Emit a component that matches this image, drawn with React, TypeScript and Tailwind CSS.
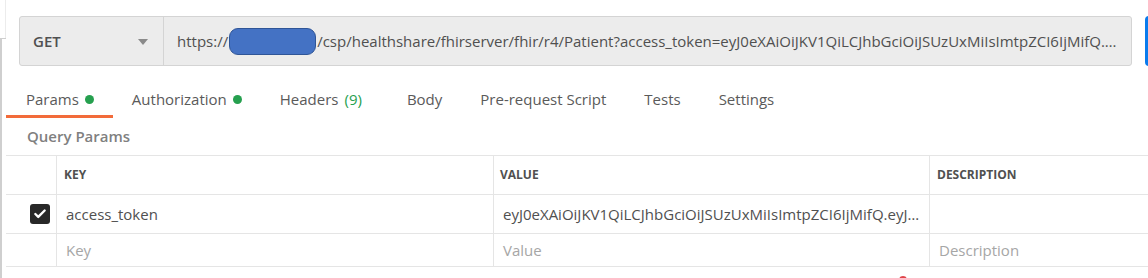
import { Check } from 'lucide-react';

const TOKEN =
  'eyJ0eXAiOiJKV1QiLCJhbGciOiJSUzUxMiIsImtpZCI6IjMifQ.eyJhdWQiOiJodHRwczovL2Zoa XJzZXJ2ZXIvZmhpci9yNCIsImV4cCI6MTYx';

const tabs = [
  { label: 'Params', dot: true, active: true, pad: 'pl-[20px] pr-[19px]' },
  { label: 'Authorization', dot: true, pad: 'px-[19px]' },
  { label: 'Headers', count: '(9)', pad: 'pl-[19px] pr-[26px]' },
  { label: 'Body', pad: 'px-[19px]' },
  { label: 'Pre-request Script', pad: 'px-[19px]' },
  { label: 'Tests', pad: 'px-[19px]' },
  { label: 'Settings', pad: 'px-[19px]' },
];

function UrlBar() {
  return (
    <div className="flex items-start pl-[19px] pt-[16px]">
      <div className="flex h-[50px] w-[1113px] shrink-0 overflow-hidden rounded-[3px] border border-[#d4d4d4] bg-[#ececec]">
        <div className="flex w-[144px] shrink-0 items-center justify-between border-r border-[#d4d4d4] pl-[13px] pr-[15px]">
          <span className="text-[15px] font-semibold text-[#505050]">GET</span>
          <svg width="10" height="6" viewBox="0 0 10 6" className="mt-[1px]">
            <path d="M0 0h10L5 6z" fill="#8a8a8a" />
          </svg>
        </div>
        <div className="flex min-w-0 flex-1 items-center pl-[13px] pr-[12px] text-[15px] text-[#505050]">
          <span className="shrink-0">https://</span>
          <span className="mx-[1px] inline-block h-[27px] w-[87px] shrink-0 rounded-[9px] border border-[#2f5597] bg-[#4472c4]" />
          <span className="min-w-0 truncate">
            /csp/healthshare/fhirserver/fhir/r4/Patient?access_token=eyJ0eXAiOiJKV1QiLCJhbGciOiJSUzUxMiIsImtpZCI6IjMifQ.…
          </span>
        </div>
      </div>
      <div className="ml-[13px] h-[50px] w-[40px] shrink-0 rounded-l-[4px] bg-[#097bed]" />
    </div>
  );
}

function Tabs() {
  return (
    <div className="mt-[14px] flex h-[38px] items-stretch">
      {tabs.map((t) => (
        <div
          key={t.label}
          className={`flex items-center gap-[6px] text-[15px] text-[#5a5a5a] ${t.pad} ${
            t.active ? 'border-b-[3px] border-[#f26b3a] pt-[3px]' : ''
          }`}
        >
          <span>{t.label}</span>
          {t.dot && <span className="h-[9px] w-[9px] rounded-full bg-[#26a04f]" />}
          {t.count && <span className="text-[#26a04f]">{t.count}</span>}
        </div>
      ))}
    </div>
  );
}

function Cell({ children, className = '' }: { children?: React.ReactNode; className?: string }) {
  return <div className={`flex min-w-0 items-center border-l border-[#e5e5e5] ${className}`}>{children}</div>;
}

function ParamsTable() {
  return (
    <div className="border-t border-[#e5e5e5] text-[15px]">
      <div className="grid h-[39px] grid-cols-[50px_437px_436px_1fr] border-b border-[#e5e5e5]">
        <div />
        <Cell className="pl-[7px] text-[12px] font-bold text-[#505050]">KEY</Cell>
        <Cell className="pl-[6px] text-[12px] font-bold text-[#505050]">VALUE</Cell>
        <Cell className="pl-[7px] text-[12px] font-bold text-[#505050]">DESCRIPTION</Cell>
      </div>
      <div className="grid h-[39px] grid-cols-[50px_437px_436px_1fr] border-b border-[#e5e5e5]">
        <div className="flex items-center pl-[24px]">
          <span className="flex h-[20px] w-[20px] items-center justify-center rounded-[3px] bg-[#282828]">
            <Check className="h-[14px] w-[14px] text-white" strokeWidth={4} />
          </span>
        </div>
        <Cell className="pl-[9px] text-[#505050]">access_token</Cell>
        <Cell className="pl-[9px] pr-[6px] text-[#505050]">
          <span className="truncate">{TOKEN}</span>
        </Cell>
        <Cell />
      </div>
      <div className="grid h-[33px] grid-cols-[50px_437px_436px_1fr] border-b border-[#e5e5e5]">
        <div />
        <Cell className="pl-[9px] text-[#a6a6a6]">Key</Cell>
        <Cell className="pl-[9px] text-[#a6a6a6]">Value</Cell>
        <Cell className="pl-[9px] text-[#a6a6a6]">Description</Cell>
      </div>
    </div>
  );
}

export default function App() {
  return (
    <div className="relative flex h-[278px] w-[1148px] overflow-hidden bg-white font-['Open_Sans',sans-serif]">
      <div className="flex w-[6px] shrink-0 flex-col">
        <div className="h-[38px] border-r border-[#ececec]" />
        <div className="flex-1 border-l-2 border-t border-[#cfcfcf]" />
      </div>
      <div className="flex min-w-0 flex-1 flex-col">
        <div className="-ml-[6px]">
          <UrlBar />
        </div>
        <Tabs />
        <div className="flex h-[37px] items-center pl-[21px] text-[15px] font-semibold text-[#808080]">
          Query Params
        </div>
        <ParamsTable />
      </div>
      <span className="absolute left-[899px] top-[276px] h-[8px] w-[8px] rounded-full border-2 border-[#e0454a]" />
    </div>
  );
}
